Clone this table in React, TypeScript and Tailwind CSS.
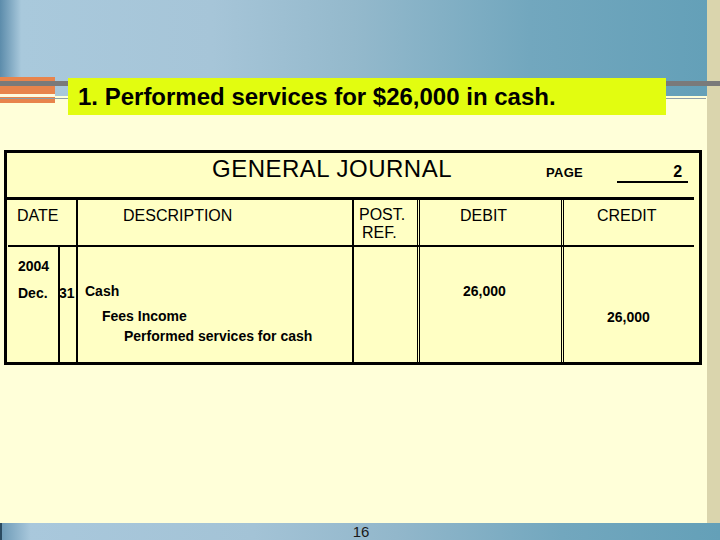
export default function App() {
  return (
    <div className="relative flex h-[540px] w-[720px] flex-col overflow-hidden bg-[#ffffd9] font-['Liberation_Sans',Arial,sans-serif] text-black">
      <div className="flex flex-1">
        <div className="flex flex-1 flex-col">
          <div className="h-[96px] bg-[linear-gradient(90deg,#5c8cab_0%,#a9c9dc_3%,#a6c5d8_30%,#94b9cc_50%,#72a7be_75%,#64a0b8_100%)]" />
          <main className="flex-1 pl-[4px] pt-[54px]">
            <JournalBox />
          </main>
        </div>
        <div className="w-[13px] bg-[#dad5ad]" />
      </div>
      <div className="h-[17px] border-l-2 border-[#2a4a60] bg-[linear-gradient(90deg,#6f9cb8_0%,#a9c8dc_4%,#a3c3d6_35%,#92b7cb_55%,#72a7be_78%,#64a0b8_100%)] text-center text-[15px] leading-[17px] text-[#1a1a1a]">
        16
      </div>

      {/* slide decorations over the header band */}
      <div className="absolute left-0 top-[77px] flex h-[26px] w-[55px] flex-col bg-[#e8844c]">
        <div className="mt-[17px] h-[3px] bg-[#fffbe0]" />
      </div>
      <div className="absolute left-0 right-0 top-[81px] h-[5px] bg-[#7a7a7a]" />
      <div className="absolute left-0 top-[98px] h-px w-[706px] bg-[#8e9fa8]" />
      <div className="absolute left-[68px] top-[78px] h-[37px] w-[598px] bg-[#e2fd10] pl-[10px] pt-[5px] text-[24px] font-bold leading-[27px]">
        1. Performed services for $26,000 in cash.
      </div>
    </div>
  )
}

function JournalBox() {
  return (
    <div className="flex h-[215px] w-[698px] flex-col border-[3px] border-black bg-[#ffffc4]">
      <div className="flex h-[44px] items-baseline pt-px">
        <span className="ml-[205px] text-[24px] leading-[30px] tracking-[0.5px]">GENERAL JOURNAL</span>
        <span className="ml-[94px] text-[13px] font-bold tracking-[0.3px]">PAGE</span>
        <span className="ml-[34px] w-[71px] border-b-2 border-black pr-[6px] text-right text-[16px] font-bold leading-[18px]">
          2
        </span>
      </div>
      <div className="mr-[5px] h-[3px] bg-black" />

      <div className="flex h-[45px] text-[16px] leading-[18px]">
        <div className="w-[69px] pl-[10px] pt-[7px]">DATE</div>
        <div className="w-[2px] bg-black" />
        <div className="w-[274px] pl-[45px] pt-[7px]">DESCRIPTION</div>
        <div className="w-[2px] bg-black" />
        <div className="w-[63px] pl-[5px] pt-[6px]">
          <div>POST.</div>
          <div className="pl-[3px]">REF.</div>
        </div>
        <div className="w-[3px] border-x border-black" />
        <div className="w-[141px] pl-[40px] pt-[7px]">DEBIT</div>
        <div className="w-[3px] border-x border-black" />
        <div className="w-[130px] pl-[33px] pt-[7px]">CREDIT</div>
      </div>
      <div className="ml-px mr-[5px] h-[2px] bg-black" />

      <div className="flex flex-1 text-[14px] font-bold leading-[20px]">
        <div className="w-[51px] pl-[11px] pt-[9px]">
          <div>2004</div>
          <div className="mt-[7px]">Dec.</div>
        </div>
        <div className="w-[2px] bg-black" />
        <div className="w-[16px] pt-[36px]">
          <div className="-ml-px">31</div>
        </div>
        <div className="w-[2px] bg-black" />
        <div className="w-[274px] pt-[34px]">
          <div className="pl-[7px]">Cash</div>
          <div className="mt-[5px] pl-[24px]">Fees Income</div>
          <div className="pl-[46px]">Performed services for cash</div>
        </div>
        <div className="w-[2px] bg-black" />
        <div className="w-[63px]" />
        <div className="w-[3px] border-x border-black" />
        <div className="w-[141px] pl-[43px] pt-[34px]">26,000</div>
        <div className="w-[3px] border-x border-black" />
        <div className="w-[130px] pl-[43px] pt-[60px]">26,000</div>
      </div>
    </div>
  )
}
